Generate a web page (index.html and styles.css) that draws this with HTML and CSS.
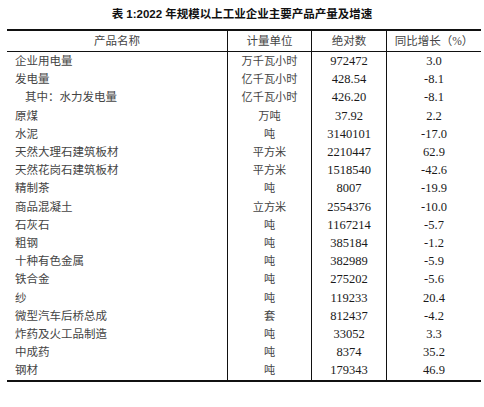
FILE: index.html
```html
<!doctype html>
<html lang="zh">
<head>
    <meta charset="UTF-8">
    <title>表1</title>
    <link rel="stylesheet" href="styles.css">
</head>
<body>
    <div class="title">表 1:2022 年规模以上工业企业主要产品产量及增速</div>
    <table class="stats">
        <colgroup>
            <col class="c-name">
            <col class="c-unit">
            <col class="c-abs">
            <col class="c-rate">
        </colgroup>
        <thead>
            <tr>
                <th>产品名称</th>
                <th>计量单位</th>
                <th>绝对数</th>
                <th>同比增长（%）</th>
            </tr>
        </thead>
        <tbody>
            <tr><td class="name">企业用电量</td><td class="unit">万千瓦小时</td><td class="num">972472</td><td class="num">3.0</td></tr>
            <tr><td class="name">发电量</td><td class="unit">亿千瓦小时</td><td class="num">428.54</td><td class="num">-8.1</td></tr>
            <tr><td class="name sub">其中：水力发电量</td><td class="unit">亿千瓦小时</td><td class="num">426.20</td><td class="num">-8.1</td></tr>
            <tr><td class="name">原煤</td><td class="unit">万吨</td><td class="num">37.92</td><td class="num">2.2</td></tr>
            <tr><td class="name">水泥</td><td class="unit">吨</td><td class="num">3140101</td><td class="num">-17.0</td></tr>
            <tr><td class="name">天然大理石建筑板材</td><td class="unit">平方米</td><td class="num">2210447</td><td class="num">62.9</td></tr>
            <tr><td class="name">天然花岗石建筑板材</td><td class="unit">平方米</td><td class="num">1518540</td><td class="num">-42.6</td></tr>
            <tr><td class="name">精制茶</td><td class="unit">吨</td><td class="num">8007</td><td class="num">-19.9</td></tr>
            <tr><td class="name">商品混凝土</td><td class="unit">立方米</td><td class="num">2554376</td><td class="num">-10.0</td></tr>
            <tr><td class="name">石灰石</td><td class="unit">吨</td><td class="num">1167214</td><td class="num">-5.7</td></tr>
            <tr><td class="name">粗钢</td><td class="unit">吨</td><td class="num">385184</td><td class="num">-1.2</td></tr>
            <tr><td class="name">十种有色金属</td><td class="unit">吨</td><td class="num">382989</td><td class="num">-5.9</td></tr>
            <tr><td class="name">铁合金</td><td class="unit">吨</td><td class="num">275202</td><td class="num">-5.6</td></tr>
            <tr><td class="name">纱</td><td class="unit">吨</td><td class="num">119233</td><td class="num">20.4</td></tr>
            <tr><td class="name">微型汽车后桥总成</td><td class="unit">套</td><td class="num">812437</td><td class="num">-4.2</td></tr>
            <tr><td class="name">炸药及火工品制造</td><td class="unit">吨</td><td class="num">33052</td><td class="num">3.3</td></tr>
            <tr><td class="name">中成药</td><td class="unit">吨</td><td class="num">8374</td><td class="num">35.2</td></tr>
            <tr><td class="name">钢材</td><td class="unit">吨</td><td class="num">179343</td><td class="num">46.9</td></tr>
        </tbody>
    </table>
</body>
</html>
```
FILE: styles.css
```css
*,*:before,*:after{
    box-sizing: border-box;
}
body{
    margin: 0;
    padding: 0;
    background: #fff;
    font-family: "Liberation Serif", "Noto Sans CJK SC", serif;
    color: #222;
}
.title{
    height: 29px;
    padding-top: 5px;
    text-align: center;
    font-family: "Liberation Sans", "Noto Sans CJK SC", sans-serif;
    font-size: 11.5px;
    line-height: 18px;
    font-weight: bold;
    color: #111;
}
.stats{
    margin-left: 7px;
    width: 474px;
    table-layout: fixed;
    border-collapse: separate;
    border-spacing: 0;
    border-top: 2px solid #111;
    border-bottom: 2px solid #111;
}
.c-name{ width: 220px; }
.c-unit{ width: 84px; }
.c-abs{ width: 75px; }
.c-rate{ width: 95px; }
.stats th,
.stats td{
    padding: 0;
    white-space: nowrap;
}
.stats th{
    height: 21px;
    font-weight: normal;
    font-size: 11.5px;
    line-height: 20px;
    color: #444;
    text-align: center;
    border-bottom: 1px solid #111;
}
.stats tbody tr{
    height: 18.2px;
}
.stats td{
    line-height: 18.2px;
    text-align: center;
}
.stats th + th,
.stats td + td{
    border-left: 1px solid #111;
}
.stats .name{
    text-align: left;
    padding-left: 8px;
    font-size: 11.5px;
    color: #444;
}
.stats .name.sub{
    padding-left: 18px;
}
.stats .unit{
    font-size: 11.2px;
    color: #444;
}
.stats .num{
    font-size: 12.5px;
    color: #1a1a1a;
}
```
